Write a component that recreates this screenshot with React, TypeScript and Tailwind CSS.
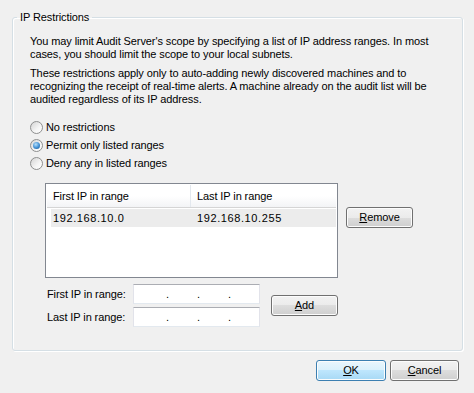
const Radio = ({ checked, label }: { checked?: boolean; label: string }) => {
  return (
    <div className="flex items-center h-[18px]">
      <span className="w-[13px] h-[13px] rounded-full border border-[#8e8f8f] bg-[linear-gradient(135deg,#d4d4d4,#f5f5f5_60%,#ffffff)] flex items-center justify-center">
        {checked && (
          <span className="w-[7px] h-[7px] rounded-full bg-[radial-gradient(circle_at_40%_35%,#b6e0fb,#3f8ed3_55%,#1a4f80)]" />
        )}
      </span>
      <span className="ml-[3px]">{label}</span>
    </div>
  );
};

const Button = ({
  children,
  primary,
  className,
}: {
  children: React.ReactNode;
  primary?: boolean;
  className?: string;
}) => {
  return (
    <button
      className={
        "h-[21px] rounded-[3px] border flex items-center justify-center shadow-[inset_0_0_0_1px_#fcfcfc] " +
        (primary
          ? "border-[#3c7fb1] bg-[linear-gradient(#eaf6fd,#d9f0fc_50%,#bee6fd_50%,#a7d9f5)] "
          : "border-[#707070] bg-[linear-gradient(#f2f2f2,#ebebeb_50%,#dddddd_50%,#cfcfcf)] ") +
        (className || "")
      }
    >
      {children}
    </button>
  );
};

const IpField = () => {
  return (
    <div className="w-[127px] h-[20px] bg-white border border-t-[#abadb3] border-x-[#e2e3ea] border-b-[#e3e9ef] flex items-center leading-none">
      <span className="w-[32px]" />
      <span className="w-[3px] text-center">.</span>
      <span className="w-[28px]" />
      <span className="w-[3px] text-center">.</span>
      <span className="w-[28px]" />
      <span className="w-[3px] text-center">.</span>
    </div>
  );
};

export default function App() {
  return (
    <div className="w-[474px] h-[393px] bg-[#f0f0f0] text-black text-[11px] tracking-[-0.1px] font-['Liberation_Sans',Arial,sans-serif] pl-[12px] pt-[10px] flex flex-col">
      {/* Group box */}
      <fieldset className="w-[451px] h-[341px] border border-[#d5dfe5] rounded-[3px] shadow-[inset_1px_1px_0_#fff,1px_1px_0_#fff]">
        <legend className="ml-[4px] px-[3px] leading-[14px]">IP Restrictions</legend>

        <div className="pl-[17px]">
          <p className="pt-[11px] leading-[13px]">
            You may limit Audit Server's scope by specifying a list of IP address ranges. In most
            <br />
            cases, you should limit the scope to your local subnets.
          </p>
          <p className="mt-[6px] leading-[13px]">
            These restrictions apply only to auto-adding newly discovered machines and to
            <br />
            recognizing the receipt of real-time alerts. A machine already on the audit list will be
            <br />
            audited regardless of its IP address.
          </p>

          <div className="mt-[12px] flex flex-col">
            <Radio label="No restrictions" />
            <Radio label="Permit only listed ranges" checked />
            <Radio label="Deny any in listed ranges" />
          </div>

          {/* Range list */}
          <div className="mt-[11px] ml-[15px] flex">
            <div className="w-[293px] h-[95px] border border-[#828790] bg-white p-[1px] flex flex-col">
              <div className="h-[23px] flex border-b border-[#d5d5d5] bg-[linear-gradient(#ffffff,#ffffff_50%,#f3f4f6)]">
                <div className="w-[144px] pl-[6px] flex items-center border-r border-[#e3e8ee]">First IP in range</div>
                <div className="flex-1 pl-[6px] flex items-center">Last IP in range</div>
              </div>
              <div className="mt-[1px] ml-[4px] h-[18px] flex bg-[#ececec] tracking-[0.6px]">
                <div className="w-[140px] pl-[2px] flex items-center">192.168.10.0</div>
                <div className="flex-1 pl-[6px] flex items-center">192.168.10.255</div>
              </div>
            </div>
            <Button className="w-[67px] mt-[24px] ml-[8px]">
              <span>
                <u>R</u>emove
              </span>
            </Button>
          </div>

          {/* Add range */}
          <div className="mt-[6px] ml-[17px] flex">
            <div className="flex flex-col gap-[3px]">
              <div className="flex items-center">
                <span className="w-[86px]">First IP in range:</span>
                <IpField />
              </div>
              <div className="flex items-center">
                <span className="w-[86px]">Last IP in range:</span>
                <IpField />
              </div>
            </div>
            <Button className="w-[67px] mt-[11px] ml-[11px]">
              <span>
                <u>A</u>dd
              </span>
            </Button>
          </div>
        </div>
      </fieldset>

      {/* Dialog buttons */}
      <div className="mt-[9px] pr-[15px] flex justify-end gap-[4px]">
        <Button primary className="w-[70px]">
          <span>
            <u>O</u>K
          </span>
        </Button>
        <Button className="w-[69px]">
          <span>
            <u>C</u>ancel
          </span>
        </Button>
      </div>
    </div>
  );
}
